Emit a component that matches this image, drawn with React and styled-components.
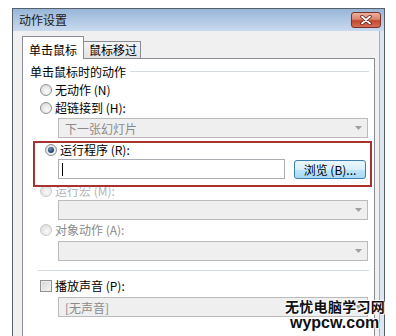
import React from "react";
import styled, { createGlobalStyle } from "styled-components";

const Global = createGlobalStyle`
  html, body { margin: 0; padding: 0; background: #fff; overflow: hidden; }
  body {
    width: 396px; height: 336px;
    font-family: "Noto Sans CJK SC", "Noto Sans", "DejaVu Sans", sans-serif;
    font-size: 12px; color: #000;
  }
`;

const Page = styled.div`
  position: relative;
  width: 396px; height: 336px; overflow: hidden;
  box-sizing: border-box;
  padding: 8px 0 0 12px;
`;

const Window = styled.div`
  width: 373px; height: 340px; box-sizing: border-box;
  border: 1px solid #56606b; border-bottom: none;
  background: #dde6f0;
  display: flex; flex-direction: column;
`;

const TitleBar = styled.div`
  height: 22px; flex: none;
  display: flex; align-items: flex-start; justify-content: space-between;
  background: linear-gradient(#98b6d8, #c9daee);
  padding-left: 6px;
`;

const Title = styled.span`
  line-height: 22px; font-size: 12px; color: #1a1a1a;
`;

const CloseButton = styled.div`
  margin: 3px 3px 0 0; width: 30px; height: 16px; box-sizing: border-box;
  border: 1px solid #7a3326; border-radius: 3px;
  background: linear-gradient(#eab0a2 0%, #dc846d 45%, #c5472f 55%, #d66e55 100%);
  display: flex; align-items: center; justify-content: center;
`;

const Client = styled.div`
  flex: 1; margin-right: 4px;
  background: #f0f0f0;
  border-right: 1px solid #a7aeb7;
  padding: 5px 4px 0 9px;
  display: flex; flex-direction: column;
`;

const TabStrip = styled.div`
  display: flex; align-items: flex-end; height: 22px; flex: none;
  position: relative; z-index: 1;
`;

const Tab = styled.div`
  box-sizing: border-box;
  width: ${(p) => (p.$active ? 62 : 57)}px;
  height: ${(p) => (p.$active ? 23 : 17)}px;
  margin-bottom: ${(p) => (p.$active ? -1 : 0)}px;
  border: 1px solid #898c95;
  border-bottom: none;
  border-left: ${(p) => (p.$active ? "1px solid #898c95" : "none")};
  background: ${(p) => (p.$active ? "#fff" : "linear-gradient(#f3f3f3, #e3e3e3)")};
  padding: ${(p) => (p.$active ? "5px 0 0 6px" : "0 0 0 5px")};
  line-height: 16px; font-size: 12px; white-space: nowrap;
`;

const Panel = styled.div`
  flex: 1; background: #fff;
  border: 1px solid #898c95;
  padding-top: 4px;
  display: flex; flex-direction: column;
`;

const GroupHeader = styled.div`
  display: flex; align-items: center; height: 16px;
  padding: 0 5px 0 7px;
  &::after {
    content: ""; flex: 1; height: 1px; background: #d5dde3; margin-left: 4px;
  }
`;

const OptionRow = styled.div`
  display: flex; align-items: center;
  height: ${(p) => p.$h || 18}px;
  margin-top: ${(p) => p.$mt || 0}px;
  padding-left: ${(p) => (p.$indent ?? 17)}px;
  color: ${(p) => p.$color || "#000"};
  white-space: nowrap;
`;

const Radio = styled.span`
  position: relative;
  width: 12px; height: 12px; box-sizing: border-box; flex: none;
  border-radius: 50%;
  border: 1px solid ${(p) => (p.$disabled ? "#c9cacb" : "#8e9091")};
  background: radial-gradient(circle at 60% 65%, #f9f9f9 0%, #e4e4e4 60%, #d2d2d2 100%);
  &::after {
    content: "";
    display: ${(p) => (p.$checked ? "block" : "none")};
    position: absolute; left: 2px; top: 2px; width: 6px; height: 6px;
    border-radius: 50%;
    background: radial-gradient(circle at 40% 35%, #6b98c0 0%, #27517a 55%, #163552 100%);
  }
`;

const Checkbox = styled.span`
  width: 12px; height: 12px; box-sizing: border-box; flex: none;
  border: 1px solid #8e9091;
  background: linear-gradient(135deg, #d4d4d4, #f6f6f6);
  box-shadow: inset 0 0 0 1px #eeeeee;
`;

const Label = styled.span`
  margin-left: 3px; line-height: 14px; font-size: 12px;
`;

const Select = styled.div`
  display: flex; align-items: center; justify-content: space-between;
  height: 20px; box-sizing: border-box; flex: none;
  margin: ${(p) => p.$mt || 0}px 6px 0 35px;
  border: 1px solid #bbbbbb;
  background: #efefef;
  padding: 0 5px 0 6px;
  color: #8a8a8a; font-size: 12px;
`;

const Highlight = styled.div`
  margin: 3px 2px 0 10px;
  border: 2px solid #a8322f;
  padding: 0 0 6px 5px;
  position: relative; z-index: 1;
`;

const InputRow = styled.div`
  display: flex; align-items: flex-start; gap: 9px;
  margin: 3px 0 0 18px;
`;

const TextInput = styled.div`
  width: 227px; height: 20px; box-sizing: border-box;
  border: 1px solid #abadb3; background: #fff;
  padding: 3px 0 0 3px;
  &::before {
    content: ""; display: block; width: 1px; height: 13px; background: #000;
  }
`;

const Button = styled.div`
  width: 72px; height: 19px; box-sizing: border-box; margin-top: 1px;
  border: 1px solid #3c7fb1; border-radius: 3px;
  background: linear-gradient(#eaf6fd 0%, #d9f0fc 50%, #bee6fd 51%, #a7d9f5 100%);
  display: flex; align-items: center; justify-content: center;
  font-size: 12px; line-height: 14px; white-space: nowrap;
`;

const Separator = styled.div`
  height: 1px; background: #d5dde3; flex: none;
  margin: 9px 5px 0 15px;
`;

const Watermark = styled.div`
  position: absolute; left: 285px; top: 299px;
  display: flex; flex-direction: column; align-items: flex-start;
  color: #111;
  text-shadow: 0 0 2px #fff, 0 0 2px #fff, 1px 1px 0 #fff, -1px -1px 0 #fff;
`;

const WatermarkCn = styled.span`
  font-family: "Noto Sans CJK SC", sans-serif; font-weight: 700;
  font-size: 14px; line-height: 14px; letter-spacing: 0.3px;
`;

const WatermarkUrl = styled.span`
  font-family: "Liberation Sans", Arial, sans-serif; font-weight: 700;
  font-size: 16px; line-height: 15px; margin: 2px 0 0 5px;
`;

const Arrow = () => (
  <svg width="7" height="4" viewBox="0 0 7 4">
    <path d="M0 0H7L3.5 4Z" fill="#a0a0a0" />
  </svg>
);

const CloseX = () => (
  <svg width="12" height="10" viewBox="0 0 12 10">
    <path d="M2 1.5L10 8.5M10 1.5L2 8.5" stroke="#5a1d14" strokeWidth="3.4" strokeLinecap="round" />
    <path d="M2 1.5L10 8.5M10 1.5L2 8.5" stroke="#fff" strokeWidth="1.8" strokeLinecap="round" />
  </svg>
);

export default function App() {
  return (
    <>
      <Global />
      <Page>
        <Window>
          <TitleBar>
            <Title>动作设置</Title>
            <CloseButton><CloseX /></CloseButton>
          </TitleBar>
          <Client>
            <TabStrip>
              <Tab $active>单击鼠标</Tab>
              <Tab>鼠标移过</Tab>
            </TabStrip>
            <Panel>
              <GroupHeader>单击鼠标时的动作</GroupHeader>
              <OptionRow $mt={2}>
                <Radio /><Label>无动作 (N)</Label>
              </OptionRow>
              <OptionRow>
                <Radio /><Label>超链接到 (H):</Label>
              </OptionRow>
              <Select $mt={1}>下一张幻灯片<Arrow /></Select>
              <Highlight>
                <OptionRow $h={13} $indent={5}>
                  <Radio $checked /><Label>运行程序 (R):</Label>
                </OptionRow>
                <InputRow>
                  <TextInput />
                  <Button>浏览 (B)...</Button>
                </InputRow>
              </Highlight>
              <OptionRow $h={16} $mt={-4} $color="#b4b4b4">
                <Radio $disabled /><Label>运行宏 (M):</Label>
              </OptionRow>
              <Select $mt={1}><span /><Arrow /></Select>
              <OptionRow $h={16} $mt={2} $color="#8a8a8a">
                <Radio $disabled /><Label>对象动作 (A):</Label>
              </OptionRow>
              <Select $mt={3}><span /><Arrow /></Select>
              <Separator />
              <OptionRow $h={16} $mt={7}>
                <Checkbox /><Label>播放声音 (P):</Label>
              </OptionRow>
              <Select $mt={3}>[无声音]<Arrow /></Select>
            </Panel>
          </Client>
        </Window>
        <Watermark>
          <WatermarkCn>无忧电脑学习网</WatermarkCn>
          <WatermarkUrl>wypcw.com</WatermarkUrl>
        </Watermark>
      </Page>
    </>
  );
}
